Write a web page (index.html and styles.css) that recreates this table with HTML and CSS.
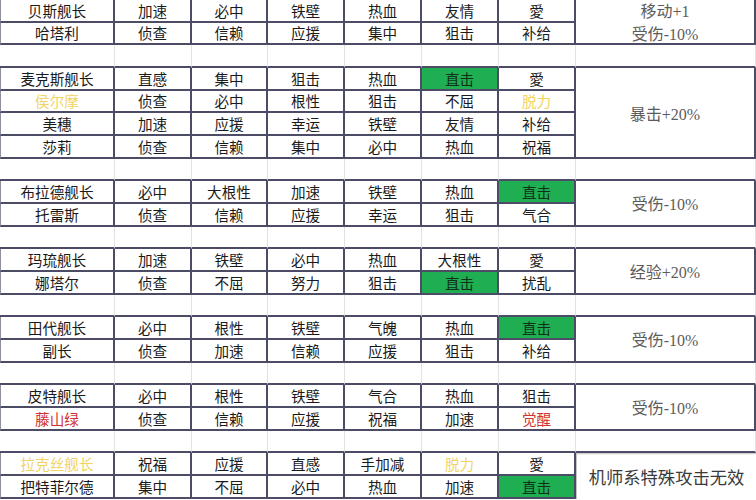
FILE: index.html
```html
<!DOCTYPE html>
<html lang="zh-CN">
<head>
<meta charset="utf-8">
<title>舰长精神表</title>
<link rel="stylesheet" href="styles.css">
</head>
<body>
<div class="sheet">
  <!-- group 1 -->
  <div class="c first">贝斯舰长</div><div class="c">加速</div><div class="c">必中</div><div class="c">铁壁</div><div class="c">热血</div><div class="c">友情</div><div class="c">愛</div>
  <div class="c bonus span2"><span>移动+1</span><span>受伤-10%</span></div>
  <div class="c first">哈塔利</div><div class="c">侦查</div><div class="c">信赖</div><div class="c">应援</div><div class="c">集中</div><div class="c">狙击</div><div class="c">补给</div>
  <div class="g"></div><div class="g"></div><div class="g"></div><div class="g"></div><div class="g"></div><div class="g"></div><div class="g"></div><div class="g"></div>
  <!-- group 2 -->
  <div class="c first">麦克斯舰长</div><div class="c">直感</div><div class="c">集中</div><div class="c">狙击</div><div class="c">热血</div><div class="c green">直击</div><div class="c">愛</div>
  <div class="c bonus span4"><span>暴击+20%</span></div>
  <div class="c first yellow">侯尔摩</div><div class="c">侦查</div><div class="c">必中</div><div class="c">根性</div><div class="c">狙击</div><div class="c">不屈</div><div class="c yellow">脱力</div>
  <div class="c first">美穗</div><div class="c">加速</div><div class="c">应援</div><div class="c">幸运</div><div class="c">铁壁</div><div class="c">友情</div><div class="c">补给</div>
  <div class="c first">莎莉</div><div class="c">侦查</div><div class="c">信赖</div><div class="c">集中</div><div class="c">必中</div><div class="c">热血</div><div class="c">祝福</div>
  <div class="g"></div><div class="g"></div><div class="g"></div><div class="g"></div><div class="g"></div><div class="g"></div><div class="g"></div><div class="g"></div>
  <!-- group 3 -->
  <div class="c first">布拉德舰长</div><div class="c">必中</div><div class="c">大根性</div><div class="c">加速</div><div class="c">铁壁</div><div class="c">热血</div><div class="c green">直击</div>
  <div class="c bonus span2"><span>受伤-10%</span></div>
  <div class="c first">托雷斯</div><div class="c">侦查</div><div class="c">信赖</div><div class="c">应援</div><div class="c">幸运</div><div class="c">狙击</div><div class="c">气合</div>
  <div class="g"></div><div class="g"></div><div class="g"></div><div class="g"></div><div class="g"></div><div class="g"></div><div class="g"></div><div class="g"></div>
  <!-- group 4 -->
  <div class="c first">玛琉舰长</div><div class="c">加速</div><div class="c">铁壁</div><div class="c">必中</div><div class="c">热血</div><div class="c">大根性</div><div class="c">愛</div>
  <div class="c bonus span2"><span>经验+20%</span></div>
  <div class="c first">娜塔尔</div><div class="c">侦查</div><div class="c">不屈</div><div class="c">努力</div><div class="c">狙击</div><div class="c green">直击</div><div class="c">扰乱</div>
  <div class="g"></div><div class="g"></div><div class="g"></div><div class="g"></div><div class="g"></div><div class="g"></div><div class="g"></div><div class="g"></div>
  <!-- group 5 -->
  <div class="c first">田代舰长</div><div class="c">必中</div><div class="c">根性</div><div class="c">铁壁</div><div class="c">气魄</div><div class="c">热血</div><div class="c green">直击</div>
  <div class="c bonus span2"><span>受伤-10%</span></div>
  <div class="c first">副长</div><div class="c">侦查</div><div class="c">加速</div><div class="c">信赖</div><div class="c">应援</div><div class="c">狙击</div><div class="c">补给</div>
  <div class="g"></div><div class="g"></div><div class="g"></div><div class="g"></div><div class="g"></div><div class="g"></div><div class="g"></div><div class="g"></div>
  <!-- group 6 -->
  <div class="c first">皮特舰长</div><div class="c">必中</div><div class="c">根性</div><div class="c">铁壁</div><div class="c">气合</div><div class="c">热血</div><div class="c">狙击</div>
  <div class="c bonus span2"><span>受伤-10%</span></div>
  <div class="c first red">藤山绿</div><div class="c">侦查</div><div class="c">信赖</div><div class="c">应援</div><div class="c">祝福</div><div class="c">加速</div><div class="c red">觉醒</div>
  <div class="g"></div><div class="g"></div><div class="g"></div><div class="g"></div><div class="g"></div><div class="g"></div><div class="g"></div><div class="g"></div>
  <!-- group 7 -->
  <div class="c first yellow">拉克丝舰长</div><div class="c">祝福</div><div class="c">应援</div><div class="c">直感</div><div class="c">手加减</div><div class="c yellow">脱力</div><div class="c">愛</div>
  <div class="c note span2"><span>机师系特殊攻击无效</span></div>
  <div class="c first">把特菲尔德</div><div class="c">集中</div><div class="c">不屈</div><div class="c">必中</div><div class="c">热血</div><div class="c">加速</div><div class="c green">直击</div>
</div>
</body>
</html>
```

FILE: styles.css
```css
html, body {
  margin: 0;
  padding: 0;
  background: #ffffff;
}

.sheet {
  display: grid;
  grid-template-columns: 115px 77px 76px 77px 77px 77px 77px 180px;
  grid-auto-rows: 22.68px;
  width: 756px;
  height: 500px;
  overflow: hidden;
  font-family: "Noto Sans CJK SC", "Noto Sans", sans-serif;
  font-size: 14.6px;
  color: #1a1a1a;
}

.c {
  box-sizing: border-box;
  display: flex;
  align-items: center;
  justify-content: center;
  padding-top: 1px;
  border-right: 2px solid #4c4c66;
  border-bottom: 2px solid #4c4c66;
  line-height: 1;
  white-space: nowrap;
}

.first {
  border-left: 1px solid #8e8e9e;
}

.g {
  box-sizing: border-box;
  border-right: 1px solid #e2e2e2;
  border-bottom: 2px solid #4c4c66;
}

.green {
  background: #1fae52;
  color: #10301a;
}

.yellow {
  color: #f2d462;
}

.red {
  color: #d23232;
}

.bonus {
  flex-direction: column;
  font-family: "Liberation Serif", "Noto Sans CJK SC", serif;
  font-size: 16px;
  color: #5c5c5c;
  line-height: 22.68px;
  padding-top: 5px;
}

.span2 {
  grid-row: span 2;
}

.span4 {
  grid-row: span 4;
}

.note {
  font-family: "Liberation Serif", "Noto Sans CJK SC", serif;
  font-size: 17.3px;
  color: #3a3a3a;
  border-left: 1px solid #c4c4c4;
  border-top: 1px solid #cfcfcf;
  border-right: none;
  border-bottom: none;
  box-shadow: inset 0 1px 0 #f2f2f2;
  padding-top: 4px;
}
```
